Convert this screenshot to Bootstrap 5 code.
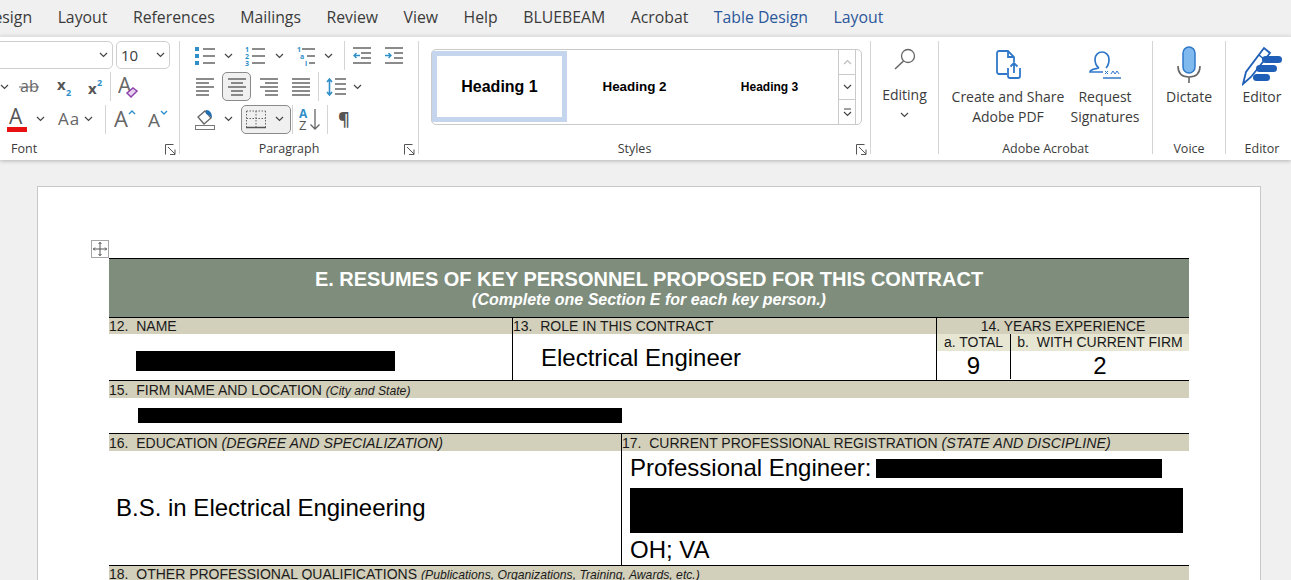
<!DOCTYPE html>
<html lang="en">
<head>
  <meta charset="UTF-8">
  <title>Resume - Word</title>
  <meta name="viewport" content="width=device-width, initial-scale=1">
  <link href="https://cdn.jsdelivr.net/npm/bootstrap@5.3.0/dist/css/bootstrap.min.css" rel="stylesheet">
  <style>
    html, body { height: 580px; overflow: hidden; }
    body { background: #f0f0f0; font-family: "Open Sans", "Liberation Sans", sans-serif; color: #3b3b3b; }
    svg text { font-family: "Open Sans", "Liberation Sans", sans-serif; }

    /* tabs */
    .tab-strip { height: 36px; gap: 25.5px; margin-left: -18px; font-size: 15.8px; white-space: nowrap; }
    .tab-ctx { color: #2b579a; }

    /* ribbon */
    .ribbon { height: 124px; background: #fff; padding-top: 4px; box-shadow: 0 1px 4px rgba(0,0,0,.25); position: relative; border-top: 1px solid #e2e2e2; overflow: hidden; }
    .rb-group { height: 113px; flex: none; border-right: 1px solid #d4d4d4; position: relative; }
    .rb-font { width: 180px; }
    .rb-para { width: 239px; }
    .rb-styles { width: 452px; }
    .rb-edit { width: 68px; }
    .rb-adobe { width: 214px; }
    .rb-voice { width: 73px; }
    .rb-editor { width: 72px; border-right: 0; }
    .rb-body { flex: 1 1 auto; min-height: 0; }
    .rb-label { height: 16px; line-height: 16px; margin-bottom: -3px; font-size: 12.5px; text-align: center; white-space: nowrap; }
    .rb-label-font { text-align: left; padding-left: 11px; }
    .rb-label-shift { padding-right: 20px; }
    .launcher { position: absolute; right: 3px; bottom: -1px; width: 11px; height: 11px; }

    .tool-row { display: grid; align-items: center; }
    .row-top { height: 29px; }
    .row-mid { height: 29px; margin-top: 2px; }
    .row-low { height: 30px; margin-top: 3px; }
    .f-row2 { grid-template-columns: 19px 38px 31px 22px 8px auto; }
    .f-row3 { padding-left: 7px; grid-template-columns: 29px 22px 26px 21px 9px 34px auto; }
    .p-row1 { padding-left: 15px; grid-template-columns: 29px 21px 30px 22px 27px 20px 9px 32px auto; }
    .p-row2 { padding-left: 16px; grid-template-columns: 26px 38px 32px 26px 8px 27px auto; }
    .p-row3 { padding-left: 15px; grid-template-columns: 29px 17px 51px 7px 28px 11px auto; }
    .tool-sep { width: 1px; height: 29px; background: #d4d4d4; }
    .tool-on { height: 29px; background: #f0f0f0; border: 1px solid #8a8a8a; border-radius: 5px; }
    .tool-on-split { width: 50px; gap: 9px; padding-left: 4px; }
    .tool-on-single { width: 29px; }

    .combo { height: 28px; border: 1px solid #cfcfcf; border-radius: 5px; padding: 0 4px; font-size: 15px; }
    .combo-font { width: 123px; margin-left: -10px; }
    .combo-size { width: 54px; margin-left: 3px; }

    /* style gallery */
    .gallery { width: 431px; height: 76px; margin: 8px 0 0 12px; border: 1px solid #cacaca; border-radius: 5px; color: #000; font-family: "Liberation Sans", Arial, sans-serif; font-weight: 700; }
    .style-cell { width: 135px; height: 100%; }
    .style-on { width: 135px; height: 71px; margin: 1px 0 0 0; border: 5px solid #c5d5ee; font-size: 16px; flex: none; }
    .style-h2 { font-size: 13.4px; }
    .style-h3 { font-size: 12px; }
    .gallery-btns { width: 18px; margin-left: auto; border-left: 1px solid #cacaca; border-right: 1px solid #cacaca; margin-right: 5px; }
    .gallery-btn { flex: 1 1 0; border-bottom: 1px solid #cacaca; }
    .gallery-btn:last-child { border-bottom: 0; }

    .big-text { font-size: 14px; line-height: 20px; text-align: center; white-space: nowrap; }
    .edit-btn { padding-top: 7px; }
    .edit-text { margin-top: 15px; }
    .edit-chev { margin-top: 7px; }
    .adobe-btn { padding-top: 9px; }
    .adobe-icon { height: 37px; }
    .voice-btn { padding-top: 5px; }
    .voice-icon { height: 41px; }
    .adobe-first { width: 126px; margin-left: 6px; }
    .adobe-second { width: 68px; }

    /* document */
    .doc-area { padding: 26px 0 0 37px; }
    .doc-page { width: 1224px; height: 420px; background: #fff; border: 1px solid #c8c8c8; padding: 53px 0 0 53px; font-family: "Liberation Sans", Arial, sans-serif; color: #000; }
    .move-handle { width: 18px; height: 18px; background: #fff; border: 1px solid #a6a6a6; }
    .form-sheet { width: 1080px; margin-left: 18px; }
    .sheet-head { height: 60px; background: #7e8d7c; color: #fff; border-top: 1px solid #000; border-bottom: 1px solid #000; font-weight: 700; }
    .sheet-title { font-size: 20px; line-height: 24px; margin-top: 8px; }
    .sheet-sub { font-size: 16px; line-height: 17px; font-style: italic; }
    .sheet-row { border-bottom: 1px solid #000; }
    .row-names { height: 63px; }
    .row-firm { height: 53px; }
    .row-edu { height: 132px; }
    .col-name { width: 404px; border-right: 1px solid #000; }
    .col-role { width: 424px; border-right: 1px solid #000; }
    .col-years { flex: 1 1 auto; }
    .col-edu { width: 513px; border-right: 1px solid #000; }
    .col-reg { flex: 1 1 auto; }
    .col-total { width: 74px; border-right: 1px solid #000; }
    .col-firm { flex: 1 1 auto; }
    .field-tag { height: 16px; line-height: 16px; background: #d2cfba; font-size: 14px; white-space: nowrap; color: #1a1a1a; }
    .field-tag em { font-size: 14.2px; }
    .field-tag .tiny { font-size: 12.2px; }
    .tag-tall { height: 17px; line-height: 18px; }
    .tag-pale { height: 17px; line-height: 17px; background: #e6e6d2; }
    .field-val { font-size: 24px; line-height: 28px; white-space: nowrap; }
    .name-box { height: 46px; padding: 17px 0 0 27px; }
    .role-box { height: 46px; padding: 10px 0 0 28px; }
    .num-box { height: 28px; padding-top: 1px; }
    .firm-box { height: 36px; padding: 10px 0 0 29px; }
    .edu-box { height: 114px; padding-left: 7px; }
    .reg-box { height: 114px; padding: 3px 0 0 8px; }
    .redact { background: #000; }
    .redact-name { width: 259px; height: 20px; }
    .redact-firm { width: 484px; height: 15px; }
    .redact-reg1 { width: 286px; height: 19px; margin-left: 5px; }
    .redact-reg2 { width: 553px; height: 45px; margin: 6px 0 3px; }
    .reg-line { height: 28px; }
  </style>
</head>
<body>

  <!-- shared icon shapes -->
  <svg width="0" height="0" class="d-block">
    <symbol id="chev" viewBox="0 0 9 6"><path d="M1 1l3.5 3.5L8 1" fill="none" stroke="#444" stroke-width="1.2"/></symbol>
    <symbol id="launch" viewBox="0 0 11 11"><path d="M.5 10.5V.5h8M3 3l7 7M10 5.5v5H5" fill="none" stroke="#555"/></symbol>
    <symbol id="alignl" viewBox="0 0 18 18"><path d="M0 1h18M0 5h13M0 9h18M0 13h13M0 17h13" stroke="#666" stroke-width="1.4"/></symbol>
    <symbol id="alignc" viewBox="0 0 18 18"><path d="M0 1h18M3 5h12M0 9h18M3 13h12M3 17h12" stroke="#666" stroke-width="1.4"/></symbol>
    <symbol id="alignr" viewBox="0 0 18 18"><path d="M0 1h18M5 5h13M0 9h18M5 13h13M5 17h13" stroke="#666" stroke-width="1.4"/></symbol>
    <symbol id="alignj" viewBox="0 0 18 18"><path d="M0 1h18M0 5h18M0 9h18M0 13h18M0 17h18" stroke="#666" stroke-width="1.4"/></symbol>
  </svg>

  <div class="tab-strip d-flex align-items-center">
    <span>Design</span><span>Layout</span><span>References</span><span>Mailings</span><span>Review</span><span>View</span><span>Help</span><span>BLUEBEAM</span><span>Acrobat</span><span class="tab-ctx">Table Design</span><span class="tab-ctx">Layout</span>
  </div>

  <div class="ribbon d-flex">

    <div class="rb-group rb-font d-flex flex-column">
      <div class="rb-body">
        <div class="row-top d-flex">
          <div class="combo combo-font d-flex align-items-center justify-content-end"><svg width="9" height="6"><use href="#chev"/></svg></div>
          <div class="combo combo-size d-flex align-items-center justify-content-between">10<svg width="9" height="6"><use href="#chev"/></svg></div>
        </div>
        <div class="tool-row row-mid f-row2">
          <svg width="9" height="6"><use href="#chev"/></svg>
          <svg width="20" height="18" viewBox="0 0 20 18"><text x="1" y="14" font-size="16" fill="#666">ab</text><path d="M0 9h20" stroke="#666"/></svg>
          <svg width="16" height="20" viewBox="0 0 16 20"><text x="0" y="13" font-size="15" font-weight="700" fill="#555">x</text><text x="9" y="19" font-size="9" font-weight="700" fill="#2f8fc9">2</text></svg>
          <svg width="16" height="20" viewBox="0 0 16 20"><text x="0" y="17" font-size="15" font-weight="700" fill="#555">x</text><text x="9" y="9" font-size="9" font-weight="700" fill="#2f8fc9">2</text></svg>
          <div class="tool-sep"></div>
          <svg width="21" height="24" viewBox="0 0 21 24"><text x="0" y="18" font-size="21" fill="#666">A</text><path d="M9 18l6-5 4 3-6 6z" fill="#e9d4f0" stroke="#8e44ad" stroke-width="1.5"/></svg>
        </div>
        <div class="tool-row row-low f-row3">
          <svg width="21" height="25" viewBox="0 0 21 25"><text x="2" y="17" font-size="21" fill="#555">A</text><rect y="20" width="20" height="5" fill="#e81010"/></svg>
          <svg width="9" height="6"><use href="#chev"/></svg>
          <svg width="24" height="20" viewBox="0 0 24 20"><text x="0" y="16" font-size="17" letter-spacing="1" fill="#666">Aa</text></svg>
          <svg width="9" height="6"><use href="#chev"/></svg>
          <div class="tool-sep"></div>
          <svg width="22" height="22" viewBox="0 0 22 22"><text x="0" y="19" font-size="22" fill="#666">A</text><path d="M15 6l3-3 3 3" fill="none" stroke="#2f8fc9" stroke-width="1.4"/></svg>
          <svg width="20" height="22" viewBox="0 0 20 22"><text x="0" y="19" font-size="19" fill="#666">A</text><path d="M13 3l3 3 3-3" fill="none" stroke="#2f8fc9" stroke-width="1.4"/></svg>
        </div>
      </div>
      <div class="rb-label rb-label-font">Font</div>
      <svg class="launcher"><use href="#launch"/></svg>
    </div>

    <div class="rb-group rb-para d-flex flex-column">
      <div class="rb-body">
        <div class="tool-row row-top p-row1">
          <svg width="20" height="18" viewBox="0 0 20 18"><path d="M8 2h12M8 9h12M8 16h12" stroke="#666" stroke-width="1.4"/><path d="M0 0h4v4H0zM0 7h4v4H0zM0 14h4v4H0z" fill="#2f8fc9"/></svg>
          <svg width="9" height="6"><use href="#chev"/></svg>
          <svg width="20" height="20" viewBox="0 0 20 20"><text x="0" y="6" font-size="7" font-weight="700" fill="#2f8fc9">1</text><text x="0" y="13" font-size="7" font-weight="700" fill="#2f8fc9">2</text><text x="0" y="20" font-size="7" font-weight="700" fill="#2f8fc9">3</text><path d="M7 3h13M7 10h13M7 17h13" stroke="#666" stroke-width="1.4"/></svg>
          <svg width="9" height="6"><use href="#chev"/></svg>
          <svg width="20" height="20" viewBox="0 0 20 20"><text x="0" y="6" font-size="7" font-weight="700" fill="#2f8fc9">1</text><text x="3" y="13" font-size="7" font-weight="700" fill="#2f8fc9">a</text><text x="8" y="20" font-size="7" font-weight="700" fill="#2f8fc9">i</text><path d="M5 3h13M10 10h8M12 17h6" stroke="#666" stroke-width="1.4"/></svg>
          <svg width="9" height="6"><use href="#chev"/></svg>
          <div class="tool-sep"></div>
          <svg width="18" height="18" viewBox="0 0 18 18"><path d="M0 1h18M8 6h10M8 11h10M0 16h18" stroke="#666" stroke-width="1.4"/><path d="M7 8.5H1M3.5 6L1 8.5 3.5 11" fill="none" stroke="#2f8fc9" stroke-width="1.4"/></svg>
          <svg width="18" height="18" viewBox="0 0 18 18"><path d="M0 1h18M9 6h9M9 11h9M0 16h18" stroke="#666" stroke-width="1.4"/><path d="M0 8.5h6M3.5 6L6 8.5 3.5 11" fill="none" stroke="#2f8fc9" stroke-width="1.4"/></svg>
        </div>
        <div class="tool-row row-mid p-row2">
          <svg width="18" height="18"><use href="#alignl"/></svg>
          <div class="tool-on tool-on-single d-flex align-items-center justify-content-center"><svg width="18" height="18"><use href="#alignc"/></svg></div>
          <svg width="18" height="18"><use href="#alignr"/></svg>
          <svg width="18" height="18"><use href="#alignj"/></svg>
          <div class="tool-sep"></div>
          <svg width="20" height="18" viewBox="0 0 20 18"><path d="M9 1h11M9 6h11M9 11h11M9 16h11" stroke="#666" stroke-width="1.4"/><path d="M3.5 1v16M1 4l2.5-3L6 4M1 14l2.5 3L6 14" fill="none" stroke="#2f8fc9" stroke-width="1.6"/></svg>
          <svg width="9" height="6"><use href="#chev"/></svg>
        </div>
        <div class="tool-row row-low p-row3">
          <svg width="20" height="21" viewBox="0 0 20 21"><path d="M3 8l7-6 6 7-7 6z" fill="#fff" stroke="#666" stroke-width="1.3"/><path d="M11 1c4 0 6 3 6 8l-3-3-3-1z" fill="#1f6fb5"/><rect x=".5" y="16.500" width="19" height="4" fill="#fff" stroke="#777"/></svg>
          <svg width="9" height="6"><use href="#chev"/></svg>
          <div class="tool-on tool-on-split d-flex align-items-center">
            <svg width="20" height="19" viewBox="0 0 20 19"><path d="M.5 1h19M.5 8.5h19M.5 1v16M10 1v16M19.5 1v16" fill="none" stroke="#666" stroke-dasharray="1.5 1.5"/><path d="M0 17.5h20" stroke="#555" stroke-width="1.5"/></svg>
            <svg width="9" height="6"><use href="#chev"/></svg>
          </div>
          <div class="tool-sep"></div>
          <svg width="22" height="24" viewBox="0 0 22 24"><text x="0" y="11" font-size="12" font-weight="700" fill="#2f8fc9">A</text><text x="0" y="23" font-size="13" fill="#555">Z</text><path d="M16 2v20M11.5 17.500L16 22l4.500-4.500" fill="none" stroke="#666" stroke-width="1.300"/></svg>
          <div class="tool-sep"></div>
          <svg width="15" height="18" viewBox="0 0 15 18"><text x="0" y="16" font-size="18" font-weight="700" fill="#555">¶</text></svg>
        </div>
      </div>
      <div class="rb-label rb-label-shift">Paragraph</div>
      <svg class="launcher"><use href="#launch"/></svg>
    </div>

    <div class="rb-group rb-styles d-flex flex-column">
      <div class="rb-body">
        <div class="gallery d-flex">
          <div class="style-on d-flex align-items-center justify-content-center">Heading 1</div>
          <div class="style-cell style-h2 d-flex align-items-center justify-content-center">Heading 2</div>
          <div class="style-cell style-h3 d-flex align-items-center justify-content-center">Heading 3</div>
          <div class="gallery-btns d-flex flex-column">
            <div class="gallery-btn d-flex align-items-center justify-content-center"><svg width="9" height="6" viewBox="0 0 9 6"><path d="M1 5l3.500-3.500L8 5" fill="none" stroke="#bdbdbd" stroke-width="1.200"/></svg></div>
            <div class="gallery-btn d-flex align-items-center justify-content-center"><svg width="9" height="6"><use href="#chev"/></svg></div>
            <div class="gallery-btn d-flex align-items-center justify-content-center"><svg width="9" height="9" viewBox="0 0 9 9"><path d="M1 1h7" stroke="#444"/><path d="M1 4l3.500 3.500L8 4" fill="none" stroke="#444" stroke-width="1.200"/></svg></div>
          </div>
        </div>
      </div>
      <div class="rb-label rb-label-shift">Styles</div>
      <svg class="launcher"><use href="#launch"/></svg>
    </div>

    <div class="rb-group rb-edit d-flex flex-column align-items-center">
      <div class="edit-btn d-flex flex-column align-items-center">
        <svg width="22" height="22" viewBox="0 0 22 22"><circle cx="14" cy="8" r="6.500" fill="none" stroke="#666" stroke-width="1.300"/><path d="M9.500 13L1 21" stroke="#666" stroke-width="1.500"/></svg>
        <div class="big-text edit-text">Editing</div>
        <svg width="9" height="6" class="edit-chev"><use href="#chev"/></svg>
      </div>
    </div>

    <div class="rb-group rb-adobe d-flex flex-column">
      <div class="rb-body d-flex">
        <div class="adobe-btn adobe-first d-flex flex-column align-items-center">
          <div class="adobe-icon"><svg width="26" height="30" viewBox="0 0 26 30"><path d="M12 24H4a2 2 0 0 1-2-2V3a2 2 0 0 1 2-2h9l6 6v5M13 1v6h6" fill="none" stroke="#2f78c9" stroke-width="1.800"/><path d="M13 18v8a2 2 0 0 0 2 2h8a2 2 0 0 0 2-2v-8M19 23V13M15.500 16.500L19 13l3.500 3.500" fill="none" stroke="#2f78c9" stroke-width="1.800"/></svg></div>
          <div class="big-text">Create and Share<br>Adobe PDF</div>
        </div>
        <div class="adobe-btn adobe-second d-flex flex-column align-items-center">
          <div class="adobe-icon"><svg width="32" height="30" viewBox="0 0 32 30"><path d="M10 18c-3-2-4-5-4-9a7 7 0 0 1 14 0c0 4-1 7-3 9M10 18c-4 1-9 1-9 4h13" fill="none" stroke="#2f78c9" stroke-width="1.700"/><path d="M16 21l3 3m0-3l-3 3M22 24l2-3 2 3 2-3 2 3" fill="none" stroke="#2f78c9"/><path d="M14 28h18" stroke="#2f78c9" stroke-width="1.500"/></svg></div>
          <div class="big-text">Request<br>Signatures</div>
        </div>
      </div>
      <div class="rb-label">Adobe Acrobat</div>
    </div>

    <div class="rb-group rb-voice d-flex flex-column align-items-center">
      <div class="rb-body voice-btn d-flex flex-column align-items-center">
        <div class="voice-icon"><svg width="24" height="38" viewBox="0 0 24 38"><rect x="6" y="1" width="12" height="26" rx="6" fill="#80b9ee" stroke="#2f78c9" stroke-width="1.500"/><path d="M1 20c0 8 5 11 11 11s11-3 11-11M12 31v6" fill="none" stroke="#666" stroke-width="1.600"/></svg></div>
        <div class="big-text">Dictate</div>
      </div>
      <div class="rb-label">Voice</div>
    </div>

    <div class="rb-group rb-editor d-flex flex-column align-items-center">
      <div class="rb-body voice-btn d-flex flex-column align-items-center">
        <div class="voice-icon"><svg width="40" height="40" viewBox="0 0 40 40"><path d="M1 38l3-12L22 2l6 5-19 24z" fill="#fff" stroke="#1f5fb8" stroke-width="1.800"/><path d="M17 9l6 5" stroke="#1f5fb8" stroke-width="1.600"/><rect x="20" y="10" width="20" height="7" rx="3.500" fill="#1f5fb8"/><rect x="14" y="19" width="21" height="7" rx="3.500" fill="#1f5fb8"/><rect x="11" y="28" width="17" height="7" rx="3.500" fill="#1f5fb8"/></svg></div>
        <div class="big-text">Editor</div>
      </div>
      <div class="rb-label">Editor</div>
    </div>
  </div>

  <div class="doc-area">
    <div class="doc-page">
      <div class="move-handle d-flex align-items-center justify-content-center">
        <svg width="14" height="14" viewBox="0 0 14 14"><path d="M7 0v14M0 7h14M5.500 2L7 .5 8.500 2M5.500 12L7 13.500 8.500 12M2 5.500L.5 7 2 8.500M12 5.500L13.500 7 12 8.500" fill="none" stroke="#555"/></svg>
      </div>
      <div class="form-sheet">
        <div class="sheet-head text-center">
          <div class="sheet-title">E. RESUMES OF KEY PERSONNEL PROPOSED FOR THIS CONTRACT</div>
          <div class="sheet-sub">(Complete one Section E for each key person.)</div>
        </div>

        <div class="sheet-row row-names d-flex">
          <div class="col-name">
            <div class="field-tag">12.&nbsp; NAME</div>
            <div class="name-box"><div class="redact redact-name"></div></div>
          </div>
          <div class="col-role">
            <div class="field-tag">13.&nbsp; ROLE IN THIS CONTRACT</div>
            <div class="role-box field-val">Electrical Engineer</div>
          </div>
          <div class="col-years">
            <div class="field-tag text-center">14. YEARS EXPERIENCE</div>
            <div class="d-flex">
              <div class="col-total">
                <div class="field-tag tag-pale text-center">a. TOTAL</div>
                <div class="num-box field-val text-center">9</div>
              </div>
              <div class="col-firm">
                <div class="field-tag tag-pale text-center">b.&nbsp; WITH CURRENT FIRM</div>
                <div class="num-box field-val text-center">2</div>
              </div>
            </div>
          </div>
        </div>

        <div class="sheet-row row-firm">
          <div class="field-tag tag-tall">15.&nbsp; FIRM NAME AND LOCATION <em class="tiny">(City and State)</em></div>
          <div class="firm-box"><div class="redact redact-firm"></div></div>
        </div>

        <div class="sheet-row row-edu d-flex">
          <div class="col-edu">
            <div class="field-tag tag-tall">16.&nbsp; EDUCATION <em>(DEGREE AND SPECIALIZATION)</em></div>
            <div class="edu-box field-val d-flex align-items-center">B.S. in Electrical Engineering</div>
          </div>
          <div class="col-reg">
            <div class="field-tag tag-tall">17.&nbsp; CURRENT PROFESSIONAL REGISTRATION <em>(STATE AND DISCIPLINE)</em></div>
            <div class="reg-box field-val">
              <div class="reg-line d-flex align-items-center">Professional Engineer:<div class="redact redact-reg1"></div></div>
              <div class="redact redact-reg2"></div>
              <div class="reg-line">OH; VA</div>
            </div>
          </div>
        </div>

        <div class="field-tag">18.&nbsp; OTHER PROFESSIONAL QUALIFICATIONS <em class="tiny">(Publications, Organizations, Training, Awards, etc.)</em></div>
      </div>
    </div>
  </div>

  <script src="https://cdn.jsdelivr.net/npm/bootstrap@5.3.0/dist/js/bootstrap.bundle.min.js"></script>
</body>
</html>
